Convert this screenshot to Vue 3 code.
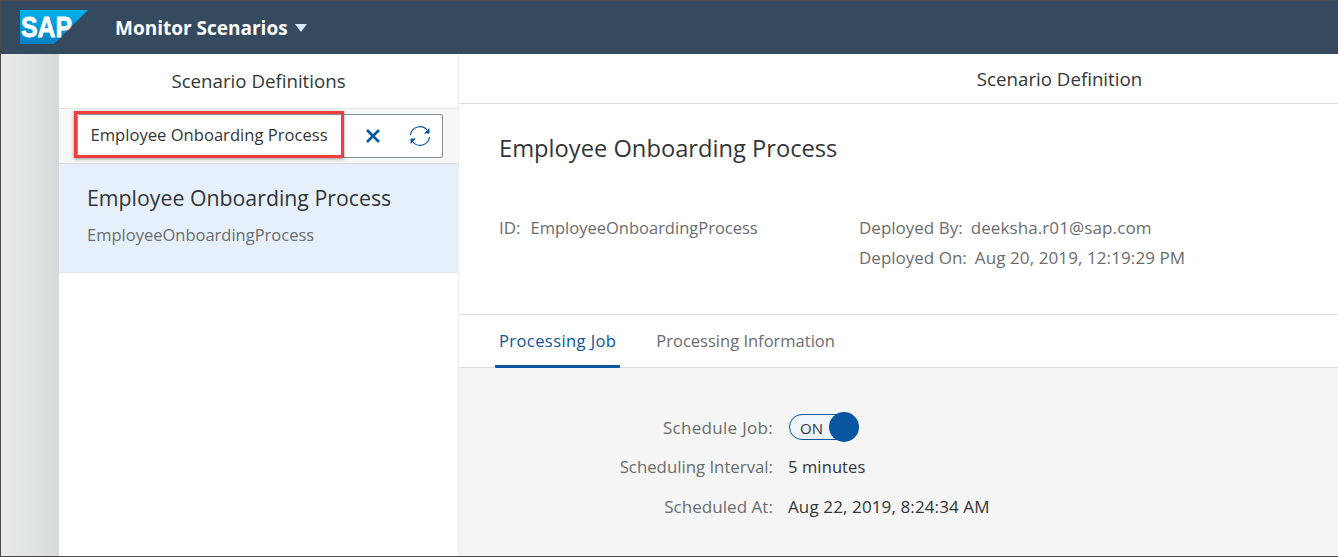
<script setup>
const facts = [
  { label: 'Deployed By:', value: 'deeksha.r01@sap.com' },
  { label: 'Deployed On:', value: 'Aug 20, 2019, 12:19:29 PM' },
]
</script>

<template>
  <div class="page">
    <header class="shell">
      <svg class="logo" width="68" height="34" viewBox="0 0 68 34">
        <defs>
          <linearGradient id="sapblue" x1="0" y1="0" x2="0" y2="1">
            <stop offset="0" stop-color="#00b1eb" />
            <stop offset="1" stop-color="#0a7fc4" />
          </linearGradient>
        </defs>
        <polygon points="0,0 68,0 34,34 0,34" fill="url(#sapblue)" />
        <text x="1" y="27" class="logo-text" textLength="51" lengthAdjust="spacingAndGlyphs">SAP</text>
      </svg>
      <span class="app-title">Monitor Scenarios</span>
      <span class="caret"></span>
    </header>

    <div class="body">
      <div class="rail"></div>

      <aside class="master">
        <div class="master-title">Scenario Definitions</div>
        <div class="search-bar">
          <div class="search">
            <span class="search-value">Employee Onboarding Process</span>
            <svg class="icon-x" width="16" height="16" viewBox="0 0 16 16">
              <path d="M2 2 L14 14 M14 2 L2 14" stroke="#0a55a0" stroke-width="2.6" fill="none" />
            </svg>
            <svg class="icon-refresh" width="22" height="22" viewBox="0 0 22 22">
              <g fill="none" stroke="#0a55a0" stroke-width="1.2">
                <path d="M1.5 10 A9.5 9.5 0 0 1 18.5 5.5" />
                <path d="M20.5 12 A9.5 9.5 0 0 1 3.5 16.5" />
              </g>
              <polygon points="20.5,3 20.5,8.5 15,8.5" fill="#0a55a0" />
              <polygon points="1.5,19 1.5,13.5 7,13.5" fill="#0a55a0" />
            </svg>
            <div class="highlight"></div>
          </div>
        </div>
        <div class="list-item">
          <div class="item-title">Employee Onboarding Process</div>
          <div class="item-sub">EmployeeOnboardingProcess</div>
        </div>
      </aside>

      <main class="detail">
        <div class="detail-title">Scenario Definition</div>
        <section class="object-head">
          <h1>Employee Onboarding Process</h1>
          <div class="attrs">
            <div class="attr-id"><span class="gap id-gap">ID:</span><span class="id-val">EmployeeOnboardingProcess</span></div>
            <div class="attr-list">
              <div v-for="f in facts" :key="f.label"><span class="gap">{{ f.label }}</span><span class="fact-val">{{ f.value }}</span></div>
            </div>
          </div>
        </section>
        <nav class="tabs">
          <span class="tab active">Processing Job</span>
          <span class="tab">Processing Information</span>
        </nav>
        <section class="form">
          <div class="row row-switch">
            <label>Schedule Job:</label>
            <div class="switch"><span>ON</span><i></i></div>
          </div>
          <div class="row row-interval">
            <label>Scheduling Interval:</label>
            <span class="val">5 minutes</span>
          </div>
          <div class="row row-at">
            <label>Scheduled At:</label>
            <span class="val">Aug 22, 2019, 8:24:34 AM</span>
          </div>
        </section>
      </main>
    </div>
  </div>
</template>

<style>
html, body { margin: 0; padding: 0; }
</style>

<style scoped>
.page {
  width: 1338px;
  height: 557px;
  box-sizing: border-box;
  border: 1px solid #4a4a4a;
  border-right: 0;
  display: flex;
  flex-direction: column;
  overflow: hidden;
  font-family: "Open Sans", "Noto Sans", sans-serif;
  color: #32363a;
}
.shell {
  height: 53px;
  flex: none;
  background: #354a5f;
  display: flex;
  align-items: center;
  padding-left: 19px;
  box-sizing: border-box;
}
.logo { margin-right: 27px; margin-top: -1px; }
.logo-text {
  font-family: "Liberation Sans", sans-serif;
  font-size: 30px;
  font-weight: 700;
  fill: #fff;
  stroke: #fff;
  stroke-width: 0.8px;
}
.app-title {
  font-size: 19px;
  font-weight: 700;
  color: #fff;
}
.caret {
  width: 0;
  height: 0;
  margin-left: 7px;
  border-left: 6.5px solid transparent;
  border-right: 6.5px solid transparent;
  border-top: 8px solid #d1e8ff;
}
.body { flex: 1; display: flex; min-height: 0; }
.rail {
  width: 58px;
  flex: none;
  background: linear-gradient(90deg, #e8eaea 0%, #e0e3e3 60%, #d6d9d9 100%);
}
.master {
  width: 399px;
  flex: none;
  background: #fff;
  border-right: 1px solid #eeeeee;
  display: flex;
  flex-direction: column;
}
.master-title {
  height: 55px;
  line-height: 54px;
  text-align: center;
  font-size: 18.7px;
  box-sizing: border-box;
  border-bottom: 1px solid #e6e6e6;
}
.search-bar {
  height: 55px;
  box-sizing: border-box;
  background: #f7f7f7;
  border-bottom: 1px solid #dddddd;
  padding: 5px 15px 0 18px;
}
.search {
  position: relative;
  height: 44px;
  box-sizing: border-box;
  background: #fff;
  border: 1px solid #89919a;
  border-radius: 2px;
  display: flex;
  align-items: center;
  padding-left: 12.5px;
}
.search-value { font-size: 16.6px; white-space: nowrap; margin-top: -4px; }
.icon-x { position: absolute; left: 287px; top: 13px; }
.icon-refresh { position: absolute; left: 331px; top: 10px; }
.highlight {
  position: absolute;
  left: -4px;
  top: -4px;
  width: 270px;
  height: 47px;
  box-sizing: border-box;
  border: 3px solid #f03e3e;
  box-shadow: 0 1px 3px rgba(0, 0, 0, 0.4);
}
.list-item {
  height: 109px;
  box-sizing: border-box;
  background: #e5f0fa;
  border-bottom: 1px solid #e4e4e4;
  padding: 18px 28px 0;
}
.item-title { font-size: 21.3px; line-height: 32px; white-space: nowrap; }
.item-sub { font-size: 16.5px; line-height: 22px; margin-top: 10px; color: #6a6d70; }
.detail { flex: 1; display: flex; flex-direction: column; background: #fff; min-width: 0; }
.detail-title {
  height: 50px;
  line-height: 49px;
  text-align: center;
  font-size: 18.7px;
  padding-left: 322px;
  box-sizing: border-box;
  border-bottom: 1px solid #dddddd;
}
.object-head {
  height: 211px;
  box-sizing: border-box;
  border-bottom: 1px solid #dddddd;
  padding: 28px 40px 0;
}
h1 { margin: 0; font-size: 23.7px; font-weight: 400; line-height: 32px; }
.attrs { display: flex; margin-top: 49px; font-size: 17px; line-height: 30px; color: #6a6d70; }
.attr-id { width: 360px; }
.id-val { font-size: 16.5px; }
.gap { margin-right: 8px; }
.id-gap { margin-right: 10px; }
.fact-val { letter-spacing: 0.1px; }
.tabs {
  height: 53px;
  flex: none;
  box-sizing: border-box;
  border-bottom: 1px solid #dddddd;
  padding-left: 36px;
  display: flex;
  gap: 32px;
}
.tab {
  padding: 0 4px;
  line-height: 52px;
  font-size: 16.5px;
  color: #6a6d70;
  height: 53px;
  box-sizing: border-box;
  white-space: nowrap;
}
.tab.active { color: #0a55a0; border-bottom: 3px solid #0a55a0; letter-spacing: 0.42px; border-radius: 0 0 1px 1px; }
.form { flex: 1; background: #f5f5f5; padding-top: 44px; }
.row { display: flex; align-items: center; font-size: 17px; }
.row label { width: 314px; text-align: right; margin-right: 15px; color: #6a6d70; white-space: nowrap; }
.row-switch { height: 30px; }
.row-interval { height: 26px; margin-top: 11px; }
.row-at { height: 26px; margin-top: 14px; }
.val { color: #32363a; letter-spacing: 0.12px; }
.row-interval .val { font-size: 16.5px; }
.row-interval label { font-size: 16.8px; }
.row-at label { letter-spacing: 0.05px; }
.row-switch label { letter-spacing: 0.3px; }
.switch {
  position: relative;
  width: 69px;
  height: 26px;
  box-sizing: border-box;
  border: 1px solid #0a55a0;
  border-radius: 13px;
  background: #eef5fc;
  font-size: 15px;
  line-height: 26px;
  padding-left: 10px;
  margin-left: 1px;
}
.switch i {
  position: absolute;
  right: -2px;
  top: -3px;
  width: 30px;
  height: 30px;
  border-radius: 50%;
  background: #0a55a0;
}
</style>
